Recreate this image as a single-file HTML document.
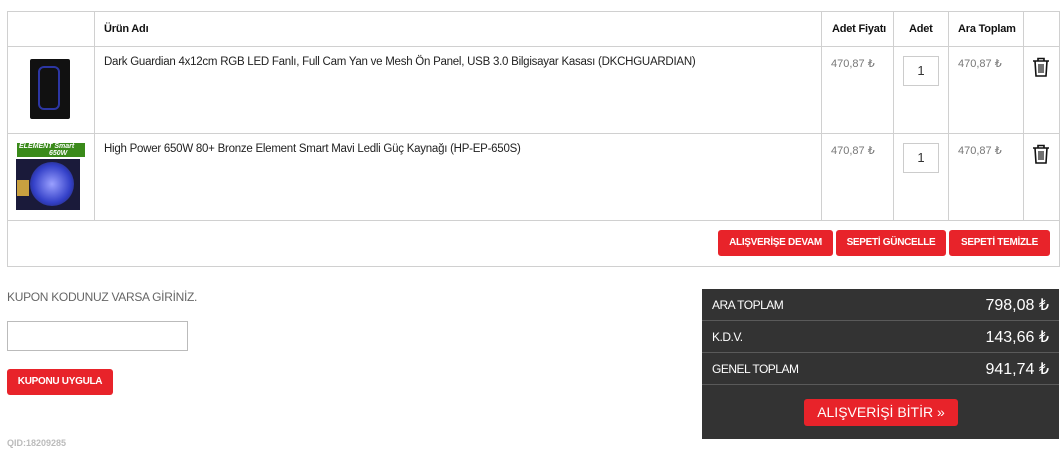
<!DOCTYPE html>
<html><head><meta charset="utf-8"><style>
*{box-sizing:border-box;margin:0;padding:0}
body{width:1063px;height:455px;background:#fff;font-family:"Liberation Sans",sans-serif;position:relative;overflow:hidden;color:#222}
.a{position:absolute}
.hl{position:absolute;height:1px;background:#d0d0d0}
.vl{position:absolute;width:1px;background:#d0d0d0}
.th{position:absolute;font-size:11px;font-weight:bold;color:#111;top:23px;letter-spacing:-0.2px}
.tx{position:absolute;font-size:11.5px;color:#222;letter-spacing:-0.25px}
.pr{position:absolute;font-size:11px;color:#777}
.qty{position:absolute;width:36px;height:30px;border:1px solid #ccc;font-size:13px;color:#333;text-align:center;line-height:28px}
.btn{position:absolute;background:#e8232a;color:#fff;font-size:10px;font-weight:bold;text-align:center;border-radius:3px;line-height:26px;height:26px;letter-spacing:-0.3px}
.dr{position:absolute;left:702px;width:357px;height:32px;border-bottom:1px solid #5a5a5a;color:#fff}
.dr .l{position:absolute;left:10px;top:9px;font-size:12px;letter-spacing:-0.5px}
.dr .r{position:absolute;right:10px;top:6px;font-size:16px}
</style></head><body>
<div class="a" style="left:7px;top:11px;width:1053px;height:256px;border:1px solid #d0d0d0"></div>
<div class="hl" style="left:7px;top:46px;width:1053px"></div>
<div class="hl" style="left:7px;top:133px;width:1053px"></div>
<div class="hl" style="left:7px;top:220px;width:1053px"></div>
<div class="vl" style="left:94px;top:11px;height:209px"></div>
<div class="vl" style="left:821px;top:11px;height:209px"></div>
<div class="vl" style="left:893px;top:11px;height:209px"></div>
<div class="vl" style="left:948px;top:11px;height:209px"></div>
<div class="vl" style="left:1023px;top:11px;height:209px"></div>
<div class="th" style="left:104px">Ürün Adı</div>
<div class="th" style="left:832px">Adet Fiyatı</div>
<div class="th" style="left:909px">Adet</div>
<div class="th" style="left:958px">Ara Toplam</div>
<div class="a" style="left:30px;top:59px;width:40px;height:60px;background:#111;border-radius:2px"></div>
<div class="a" style="left:38px;top:66px;width:22px;height:44px;border:2px solid #3340c8;border-radius:6px;opacity:.8"></div>
<div class="a" style="left:17px;top:143px;width:68px;height:14px;background:#3a8a1a;color:#fff;font-size:7px;font-weight:bold;font-style:italic;line-height:7px;padding-left:2px">ELEMENT Smart<br><span style="margin-left:30px">650W</span></div>
<div class="a" style="left:16px;top:159px;width:64px;height:51px;background:#1a1a3a"></div>
<div class="a" style="left:30px;top:162px;width:44px;height:44px;border-radius:50%;background:radial-gradient(#9aa0ff,#3340c8 60%,#1a1a3a)"></div>
<div class="a" style="left:17px;top:180px;width:12px;height:16px;background:#c8a040"></div>
<div class="tx" style="left:104px;top:56px">Dark Guardian 4x12cm RGB LED Fanlı, Full Cam Yan ve Mesh Ön Panel, USB 3.0 Bilgisayar Kasası (DKCHGUARDIAN)</div>
<div class="tx" style="left:104px;top:143px">High Power 650W 80+ Bronze Element Smart Mavi Ledli Güç Kaynağı (HP-EP-650S)</div>
<div class="pr" style="left:831px;top:57px">470,87 ₺</div>
<div class="pr" style="left:958px;top:57px">470,87 ₺</div>
<div class="pr" style="left:831px;top:144px">470,87 ₺</div>
<div class="pr" style="left:958px;top:144px">470,87 ₺</div>
<div class="qty" style="left:903px;top:56px">1</div>
<div class="qty" style="left:903px;top:143px">1</div>
<svg class="a" style="left:1032px;top:57px" width="18" height="20" viewBox="0 0 18 20"><path d="M1 4h16M6 4V1.5h6V4M3 4l1 15h10l1-15" fill="none" stroke="#111" stroke-width="1.6"/><path d="M7 7v9M9 7v9M11 7v9" stroke="#111" stroke-width="1.2"/></svg>
<svg class="a" style="left:1032px;top:144px" width="18" height="20" viewBox="0 0 18 20"><path d="M1 4h16M6 4V1.5h6V4M3 4l1 15h10l1-15" fill="none" stroke="#111" stroke-width="1.6"/><path d="M7 7v9M9 7v9M11 7v9" stroke="#111" stroke-width="1.2"/></svg>
<div class="btn" style="left:718px;top:230px;width:115px">ALIŞVERİŞE DEVAM</div>
<div class="btn" style="left:836px;top:230px;width:110px">SEPETİ GÜNCELLE</div>
<div class="btn" style="left:949px;top:230px;width:101px">SEPETİ TEMİZLE</div>
<div class="a" style="left:7px;top:290px;font-size:12px;color:#666;letter-spacing:-0.3px">KUPON KODUNUZ VARSA GİRİNİZ.</div>
<div class="a" style="left:7px;top:321px;width:181px;height:30px;border:1px solid #bbb"></div>
<div class="btn" style="left:7px;top:369px;width:106px">KUPONU UYGULA</div>
<div class="a" style="left:7px;top:438px;font-size:9px;font-weight:bold;color:#bbb">QID:18209285</div>
<div class="a" style="left:702px;top:289px;width:357px;height:150px;background:#333"></div>
<div class="dr" style="top:289px"><span class="l">ARA TOPLAM</span><span class="r">798,08 ₺</span></div>
<div class="dr" style="top:321px"><span class="l">K.D.V.</span><span class="r">143,66 ₺</span></div>
<div class="dr" style="top:353px"><span class="l">GENEL TOPLAM</span><span class="r">941,74 ₺</span></div>
<div class="btn" style="left:804px;top:399px;width:154px;font-size:14px;font-weight:normal;line-height:27px;height:27px;letter-spacing:0">ALIŞVERİŞİ BİTİR »</div>
</body></html>
